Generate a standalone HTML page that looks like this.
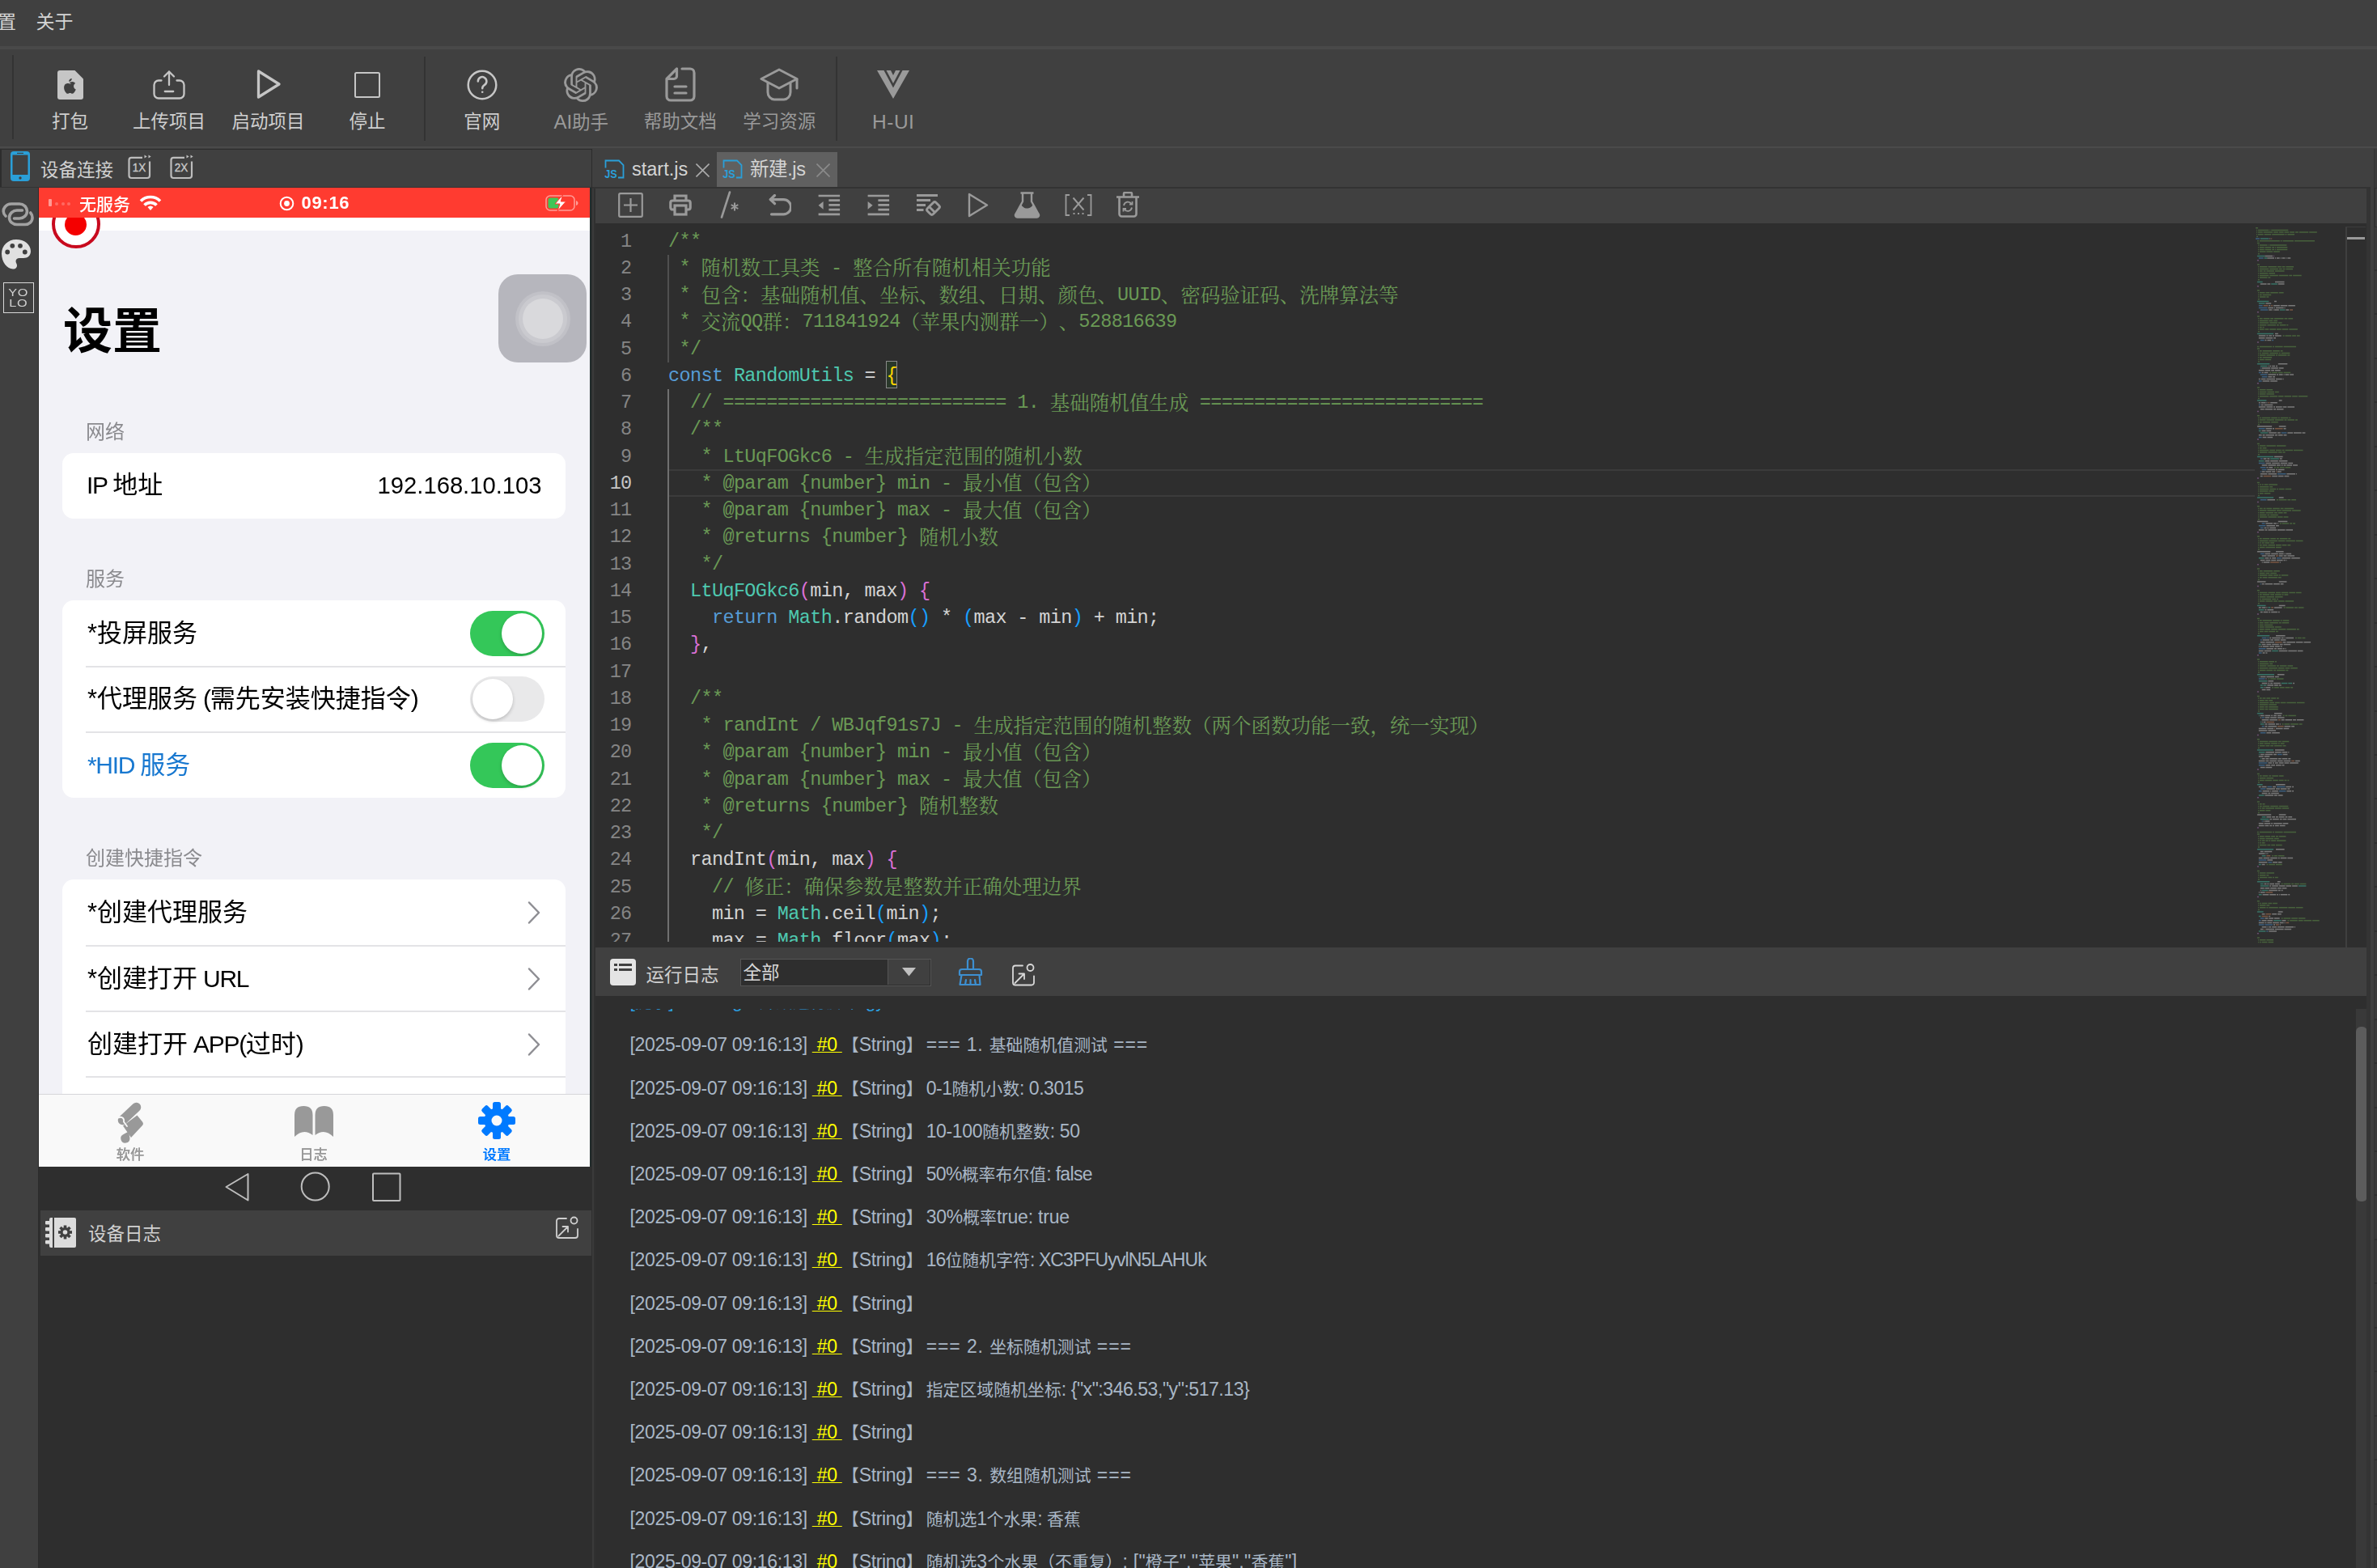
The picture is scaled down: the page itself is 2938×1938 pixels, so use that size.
<!DOCTYPE html>
<html lang="zh-CN"><head><meta charset="utf-8"><title>IDE</title>
<style>
*{box-sizing:border-box;margin:0;padding:0}
html,body{width:2938px;height:1938px;overflow:hidden;background:#404040}
body{position:relative;font-family:"Liberation Sans","Noto Sans CJK SC",sans-serif;color:#ccc}
.abs{position:absolute}
.ui{font-family:"Liberation Sans","Noto Sans CJK SC",sans-serif;font-size:22.5px;color:#cfcfcf;white-space:nowrap;line-height:30px}
.tb{position:absolute;top:61px;height:121px;width:122.5px;text-align:center}
.tb svg{position:absolute;left:50%;transform:translateX(-50%)}
.tb>span{position:absolute;left:0;width:100%;top:136px;margin-top:-61px;font-size:22.5px;line-height:30px;color:#cfcfcf;white-space:nowrap;text-align:center}
.tb.dim>span{color:#9a9a9a}
.vsep{position:absolute;width:2px;background:#333;top:68px;height:104px}
/* phone */
#phone{filter:blur(.45px);position:absolute;left:48px;top:232px;width:681px;height:1210px;background:#f2f2f7;overflow:hidden;font-family:"Liberation Sans","Noto Sans CJK SC",sans-serif;color:#000}
.card{position:absolute;left:29px;width:622px;background:#fff;border-radius:14px}
.glabel{position:absolute;left:58px;font-size:24px;color:#8a8a8e;line-height:30px;white-space:nowrap}
.row{position:absolute;left:60px;font-size:31px;line-height:40px;color:#000;white-space:nowrap}
.row .lt{font-size:30px;letter-spacing:-1.3px}
.rsep{position:absolute;left:58px;right:0;height:2px;background:#e3e3e6}
.tog{position:absolute;left:533px;width:92px;height:56px;border-radius:28px;background:#34c759}
.tog i{position:absolute;top:3px;right:3px;width:50px;height:50px;border-radius:25px;background:#fff;box-shadow:0 2px 4px rgba(0,0,0,.2)}
.tog.off{background:#e9e9ea}
.tog.off i{right:auto;left:3px}
.chev{position:absolute;left:603px;width:18px;height:30px}
/* editor */
#code{position:absolute;left:736px;top:276px;width:2189px;height:895px;background:#2e2e2e;overflow:hidden}
.ln{position:absolute;left:0;width:44.600px;text-align:right;font-family:"Liberation Mono","Noto Serif CJK SC",monospace;font-size:23.5px;letter-spacing:-.625px;line-height:33.25px;height:33.25px;color:#858585;white-space:pre}
.cl{position:absolute;left:90px;font-family:"Liberation Mono","Noto Serif CJK SC",monospace;font-size:23.5px;letter-spacing:-.625px;line-height:33.25px;height:33.25px;color:#d4d4d4;white-space:pre}
.cl b{font-weight:normal;font-family:"Noto Serif CJK SC","Liberation Mono",serif;font-size:24.5px;line-height:0;letter-spacing:0;position:relative;top:2.5px;text-spacing-trim:space-all;font-kerning:none}
.cm{color:#6a9955}.kw{color:#569cd6}.ty{color:#4ec9b0}.b1{color:#ffd700}.b2{color:#da70d6}.b3{color:#179fff}
/* log */
#log{position:absolute;left:736px;top:1231px;width:2190px;height:707px;background:#2e2e2e;overflow:hidden}
.ll{position:absolute;left:42.5px;font-family:"Liberation Sans","Noto Sans CJK SC",sans-serif;font-size:23px;letter-spacing:-.34px;line-height:30px;height:30px;color:#a9b7c6;white-space:pre}
.ll b{font-weight:normal;font-size:20.9px;letter-spacing:0;line-height:0;text-spacing-trim:space-all}
.ll u{color:#ffff00;text-decoration:underline;text-decoration-thickness:1.3px;text-underline-offset:.6px}
</style></head><body>

<div class="abs" style="left:0;top:0;width:2938px;height:58px;background:#404040"></div>
<div class="abs ui" style="left:-3px;top:12px;font-size:23px;color:#d4d4d4">置</div>
<div class="abs ui" style="left:44.500px;top:12px;font-size:23px;color:#d4d4d4">关于</div>
<div class="abs" style="left:0;top:57px;width:2938px;height:4px;background:#494949"></div>
<div class="vsep" style="left:14.500px"></div>
<div class="vsep" style="left:524px;top:70px"></div>
<div class="vsep" style="left:1033px;top:70px"></div>
<div class="tb" style="left:25.25px"><svg style="top:25.5px" width="32" height="36" viewBox="0 0 32 36"><path d="M0 3a3 3 0 0 1 3-3H21.5L32 10.5V33a3 3 0 0 1-3 3H3a3 3 0 0 1-3-3Z" fill="#c6c6c6"/><path d="M16.2 16.2c.9 0 1.9-.9 3.2-.8 1 0 2.300.6 3 1.600-2.500 1.500-2.100 5 .5 6-.5 1.300-1.100 2.500-2 3.500-.8.900-1.700.900-2.500.5-.9-.4-1.700-.4-2.600 0-1 .5-1.700.3-2.400-.4-3.400-3.700-2.900-9.400 1.200-9.600 1-.1 1.700.5 2.300.5.100 0 .8-.1 1.300-.3ZM18.900 12.200c.1 1.700-1.400 3.100-2.900 3-.2-1.600 1.400-3.100 2.900-3Z" fill="#404040" transform="translate(15.800 19.600) scale(1.250) translate(-17.300 -19.900)"/></svg><span>打包</span></div>
<div class="tb" style="left:147.75px"><svg style="top:25px" width="40" height="37" viewBox="0 0 40 37" fill="none" stroke="#c6c6c6" stroke-width="2.300" stroke-linecap="round" stroke-linejoin="round"><path d="M10.500 13.500H7a5.500 5.500 0 0 0-5.500 5.500v11a5.500 5.500 0 0 0 5.500 5.500h26a5.500 5.500 0 0 0 5.500-5.500V19a5.500 5.500 0 0 0-5.500-5.500H29.500"/><path d="M20 19V2.500M14 8.500l6-6 6 6M14.800 27h10.400"/></svg><span>上传项目</span></div>
<div class="tb" style="left:270.25px"><svg style="top:24px" width="32" height="38" viewBox="0 0 32 38" fill="none" stroke="#c6c6c6" stroke-width="3.300" stroke-linejoin="round"><path d="M3.500 3L29 19L3.500 35Z"/></svg><span>启动项目</span></div>
<div class="tb" style="left:392.75px"><svg style="top:28px" width="32" height="32" viewBox="0 0 32 32" fill="none" stroke="#c6c6c6" stroke-width="2"><rect x="1" y="1" width="30" height="30" rx="1.500"/></svg><span>停止</span></div>
<div class="tb" style="left:534.5px"><svg style="top:24.500px" width="38" height="38" viewBox="0 0 38 38" fill="none" stroke="#c6c6c6" stroke-width="2.500" stroke-linecap="round"><circle cx="19" cy="19" r="17.300"/><path d="M13.800 14.500a5.300 5.300 0 1 1 8.200 4.400c-2 1.300-2.800 2.200-2.800 4.300"/><circle cx="19.200" cy="27.800" r="1.300" fill="#c6c6c6" stroke="none"/></svg><span>官网</span></div>
<div class="tb dim" style="left:657px"><svg style="top:22.500px" width="42" height="42" viewBox="0 0 24 24"><path d="M22.2819 9.8211a5.9847 5.9847 0 0 0-.5157-4.9108 6.0462 6.0462 0 0 0-6.5098-2.9A6.0651 6.0651 0 0 0 4.9807 4.1818a5.9847 5.9847 0 0 0-3.9977 2.9 6.0462 6.0462 0 0 0 .7427 7.0966 5.98 5.98 0 0 0 .511 4.9107 6.051 6.051 0 0 0 6.5146 2.9001A5.9847 5.9847 0 0 0 13.2599 24a6.0557 6.0557 0 0 0 5.7718-4.2058 5.9894 5.9894 0 0 0 3.9977-2.9001 6.0557 6.0557 0 0 0-.7475-7.0729zm-9.022 12.6081a4.4755 4.4755 0 0 1-2.8764-1.0408l.1419-.0804 4.7783-2.7582a.7948.7948 0 0 0 .3927-.6813v-6.7369l2.02 1.1686a.071.071 0 0 1 .038.052v5.5826a4.504 4.504 0 0 1-4.4945 4.4944zm-9.6607-4.1254a4.4708 4.4708 0 0 1-.5346-3.0137l.142.0852 4.783 2.7582a.7712.7712 0 0 0 .7806 0l5.8428-3.3685v2.3324a.0804.0804 0 0 1-.0332.0615L9.74 19.9502a4.4992 4.4992 0 0 1-6.1408-1.6464zM2.3408 7.8956a4.485 4.485 0 0 1 2.3655-1.9728V11.6a.7664.7664 0 0 0 .3879.6765l5.8144 3.3543-2.0201 1.1685a.0757.0757 0 0 1-.071 0l-4.8303-2.7865A4.504 4.504 0 0 1 2.3408 7.872zm16.5963 3.8558L13.1038 8.364 15.1192 7.2a.0757.0757 0 0 1 .071 0l4.8303 2.7913a4.4944 4.4944 0 0 1-.6765 8.1042v-5.6772a.79.79 0 0 0-.407-.667zm2.0107-3.0231l-.142-.0852-4.7735-2.7818a.7759.7759 0 0 0-.7854 0L9.409 9.2297V6.8974a.0662.0662 0 0 1 .0284-.0615l4.8303-2.7866a4.4992 4.4992 0 0 1 6.6802 4.66zM8.3065 12.863l-2.02-1.1638a.0804.0804 0 0 1-.038-.0567V6.0742a4.4992 4.4992 0 0 1 7.3757-3.4537l-.142.0805L8.704 5.459a.7948.7948 0 0 0-.3927.6813zm1.0976-2.3654l2.602-1.4998 2.6069 1.4998v2.9994l-2.5974 1.4997-2.6067-1.4997Z" fill="#9a9a9a"/></svg><span><span style="font-size:24px">AI</span>助手</span></div>
<div class="tb dim" style="left:779.5px"><svg style="top:22px" width="38" height="43" viewBox="0 0 38 43" fill="none" stroke="#9a9a9a" stroke-width="3.200" stroke-linecap="round" stroke-linejoin="round"><path d="M21 2H31a5 5 0 0 1 5 5V36a5 5 0 0 1-5 5H7a5 5 0 0 1-5-5V14.500L14.500 2V11a3.500 3.500 0 0 1-3.500 3.500H2.500"/><path d="M12 24H26M12 32H26"/></svg><span>帮助文档</span></div>
<div class="tb dim" style="left:902px"><svg style="top:22.500px" width="48" height="42" viewBox="0 0 48 42" fill="none" stroke="#9a9a9a" stroke-width="3" stroke-linecap="round" stroke-linejoin="round"><path d="M24 2L2 13.500L24 25L46 13.500Z"/><path d="M10 18.500V30a8 9 0 0 0 8 9H30a8 9 0 0 0 8-9V18.500"/><path d="M46 14V25"/></svg><span>学习资源</span></div>
<div class="tb dim" style="left:1043px"><svg style="top:26px" width="40" height="35" viewBox="0 0 40 35"><path d="M0 0H8.500L20 21.500L31.500 0H40L20 35Z" fill="#9a9a9a"/><path d="M11.500 0H17L20 6L23 0H28.500L20 16Z" fill="#9a9a9a"/></svg><span><span style="font-size:24.500px;letter-spacing:.5px">H-UI</span></span></div>

<div class="abs" style="left:0;top:181.300px;width:2938px;height:1.800px;background:#4a4a4a"></div>

<!-- left panel frame -->
<div class="abs" style="left:0;top:183.500px;width:732px;height:1.500px;background:#2d2d2d"></div>
<div class="abs" style="left:730.500px;top:183.500px;width:1.500px;height:1755px;background:#2b2b2b"></div>
<div class="abs" style="left:0;top:230.500px;width:731px;height:1.500px;background:#333"></div>
<div class="abs" style="left:0;top:185px;width:2px;height:46px;background:#2d2d2d"></div>
<!-- device bar -->
<svg class="abs" style="left:13px;top:187px" width="24" height="37" viewBox="0 0 24 37"><rect x="0" y="0" width="24" height="37" rx="4" fill="#2a9fd8"/><rect x="2.500" y="4.500" width="19" height="24.500" fill="#404040"/><circle cx="12" cy="33" r="1.700" fill="#404040"/><rect x="8" y="1.800" width="8" height="1.200" fill="#404040"/></svg>
<div class="abs ui" style="left:50px;top:195.500px;color:#d0d0d0">设备连接</div>
<svg class="abs" style="left:157px;top:190px" width="31" height="32" viewBox="0 0 31 32" fill="none" stroke="#bdbdbd" stroke-width="2.200"><path d="M19 4.800H5.500a3 3 0 0 0-3 3V27a3 3 0 0 0 3 3H25a3 3 0 0 0 3-3V9.500"/><path d="M21.500 1.500l3.200 2-3.200 2zM26.500 1.500l3.200 2-3.200 2z" fill="#bdbdbd" stroke="none"/><text x="6.800" y="21.700" font-family="Liberation Sans,sans-serif" font-size="15" fill="#c8c8c8" stroke="#c8c8c8" stroke-width=".400" textLength="16.500" lengthAdjust="spacingAndGlyphs">1X</text></svg>
<svg class="abs" style="left:209px;top:190px" width="31" height="32" viewBox="0 0 31 32" fill="none" stroke="#bdbdbd" stroke-width="2.200"><path d="M19 4.800H5.500a3 3 0 0 0-3 3V27a3 3 0 0 0 3 3H25a3 3 0 0 0 3-3V9.500"/><path d="M21.500 1.500l3.200 2-3.200 2zM26.500 1.500l3.200 2-3.200 2z" fill="#bdbdbd" stroke="none"/><text x="6.800" y="21.700" font-family="Liberation Sans,sans-serif" font-size="15" fill="#c8c8c8" stroke="#c8c8c8" stroke-width=".400" textLength="16.500" lengthAdjust="spacingAndGlyphs">2X</text></svg>
<!-- left icon strip -->
<div class="abs" style="left:0;top:232px;width:48px;height:1706px;background:#2c2c2c"></div><div class="abs" style="left:0;top:232px;width:46.500px;height:1706px;background:#404040"></div>
<svg class="abs" style="left:0px;top:248px" width="44" height="34" viewBox="0 0 44 34" fill="none" stroke="#a2a2a2" stroke-width="3.600" stroke-linecap="round"><path d="M7 19C3.500 16 3.500 11 6 8C8 5 11 4 14 4H24C29 4 33.500 8 33.500 13C33.500 18 29 22 24 22H17.500"/><path d="M27.500 12H21C16 12 11.500 16 11.500 21C11.500 26 16 29.500 21 29.500H31C36 29.500 40 26 40 21C40 18.500 39 16.500 37.700 15"/></svg>
<svg class="abs" style="left:2px;top:296px" width="36" height="37" viewBox="0 0 36 37"><path d="M18 0C8 0 0 7.500 0 17.500 0 28 7 36.500 14 36.500c3.500 0 5-2 5-4.500 0-2-1.500-3-1.500-5 0-2.500 2-4 4.500-4H27c5.500 0 9-3.500 9-8.500C36 6 28 0 18 0Z" fill="#e0e0e0"/><circle cx="7.200" cy="15.500" r="2.900" fill="#404040"/><circle cx="13.300" cy="7.800" r="2.900" fill="#404040"/><circle cx="23" cy="7.800" r="2.900" fill="#404040"/><circle cx="28.800" cy="15.500" r="2.900" fill="#404040"/></svg>
<div class="abs" style="left:4px;top:349px;width:37.500px;height:37.500px;border:1.500px solid #d8d8d8"></div>
<div class="abs" style="left:4px;top:355px;width:37.500px;text-align:center;font-family:'Liberation Sans',sans-serif;font-size:13px;line-height:13px;color:#d0d0d0;letter-spacing:.5px;transform:scaleX(1.250)">YO<br>LO</div>

<div class="abs" style="left:48px;top:232px;width:684px;height:1706px;background:#2e2e2e"></div>
<div id="phone">
 <div class="abs" style="left:0;top:0;width:681px;height:37px;background:#ff3b30"></div>
 <div class="abs" style="left:0;top:37px;width:681px;height:16px;background:#fff"></div>
 <!-- record circle (clipped by status bar) -->
 <div class="abs" style="left:0;top:37px;width:200px;height:60px;overflow:hidden"><div class="abs" style="left:15.500px;top:-22px;width:60px;height:60px;border-radius:30px;border:4.500px solid #c80a1e;background:#fff"></div><div class="abs" style="left:31.800px;top:-5.500px;width:27.500px;height:27.500px;border-radius:14px;background:#f40000"></div></div>
 <!-- status bar content -->
 <div class="abs" style="left:12px;top:14px;width:4px;height:9px;border-radius:1px;background:#ff9a94"></div>
 <div class="abs" style="left:20px;top:18px;width:4px;height:4px;border-radius:2px;background:#ff6a62"></div>
 <div class="abs" style="left:27.500px;top:18px;width:4px;height:4px;border-radius:2px;background:#ff6a62"></div>
 <div class="abs" style="left:35px;top:18px;width:4px;height:4px;border-radius:2px;background:#ff6a62"></div>
 <div class="abs" style="left:50px;top:6.500px;font-size:21px;line-height:28px;color:#fff;font-weight:500;font-family:'Liberation Sans','Noto Sans CJK SC',sans-serif;white-space:nowrap;">无服务</div>
 <svg class="abs" style="left:124px;top:8px" width="28" height="21" viewBox="0 0 28 21" fill="none" stroke="#fff" stroke-width="3.600"><path d="M2 8.500a17 17 0 0 1 24 0"/><path d="M6.500 13.500a10.500 10.500 0 0 1 15 0"/><path d="M14 20l-3.500-4a4.800 4.800 0 0 1 7 0Z" fill="#fff" stroke="none"/></svg>
 <svg class="abs" style="left:297px;top:9.500px" width="19" height="19" viewBox="0 0 19 19"><circle cx="9.500" cy="9.500" r="7.800" fill="none" stroke="#fff" stroke-width="2"/><circle cx="9.500" cy="9.500" r="3.400" fill="#fff"/></svg>
 <div class="abs" style="left:324.500px;top:5px;font-size:22px;line-height:28px;color:#fff;font-weight:bold;font-family:'Liberation Sans',sans-serif;letter-spacing:.7px">09:16</div>
 <svg class="abs" style="left:626px;top:9px" width="42" height="20" viewBox="0 0 42 20"><rect x="1" y="1" width="35" height="18" rx="5" fill="none" stroke="#ff9d97" stroke-width="1.500"/><rect x="3.500" y="3.500" width="13" height="13" rx="2.500" fill="#3fc657"/><path d="M38 7v6c1.500-.5 2.500-1.500 2.500-3s-1-2.500-2.500-3Z" fill="#ff9d97"/><path d="M21.500 0L12 11h6l-3 9L25.500 8h-6.300Z" fill="#fff" stroke="#ff3b30" stroke-width="1"/></svg>
 <!-- title -->
 <div class="abs" style="left:30px;top:138px;font-size:61px;line-height:80px;font-weight:bold;color:#000;font-family:'Liberation Sans','Noto Sans CJK SC',sans-serif;white-space:nowrap">设置</div>
 <!-- assistive touch -->
 <div class="abs" style="left:568px;top:107px;width:109px;height:109px;border-radius:24px;background:#b6b6bd"></div>
 <div class="abs" style="left:588.500px;top:127.500px;width:68px;height:68px;border-radius:34px;background:#c1c1c7"></div>
 <div class="abs" style="left:592.500px;top:131.500px;width:60px;height:60px;border-radius:30px;background:#cacacf"></div>
 <div class="abs" style="left:597.500px;top:136.500px;width:50px;height:50px;border-radius:25px;background:#d9d9dc"></div>
 <!-- network -->
 <div class="glabel" style="top:287px">网络</div>
 <div class="card" style="top:328px;height:81px"></div>
 <div class="row" style="top:348px;left:59px"><span class="lt">IP </span>地址</div>
 <div class="row" style="left:auto;right:59.500px;top:348px;font-size:29.200px">192.168.10.103</div>
 <!-- services -->
 <div class="glabel" style="top:468.500px">服务</div>
 <div class="card" style="top:509.500px;height:244.500px"></div>
 <div class="row" style="top:531px">*投屏服务</div>
 <div class="tog" style="top:522.500px"><i></i></div>
 <div class="rsep" style="top:590.500px;right:30px"></div>
 <div class="row" style="top:612px">*代理服务<span class="lt"> (</span>需先安装快捷指令<span class="lt">)</span></div>
 <div class="tog off" style="top:604px"><i></i></div>
 <div class="rsep" style="top:671.500px;right:30px"></div>
 <div class="row" style="top:693.500px;color:#1878d0"><span class="lt">*HID </span>服务</div>
 <div class="tog" style="top:685.500px"><i></i></div>
 <!-- shortcuts -->
 <div class="glabel" style="top:813.500px">创建快捷指令</div>
 <div class="card" style="top:855px;height:400px;border-bottom-left-radius:0;border-bottom-right-radius:0"></div>
 <div class="row" style="top:876px">*创建代理服务</div>
 <svg class="chev" style="top:881px" viewBox="0 0 18 30" fill="none" stroke="#8e8e93" stroke-width="2.500" stroke-linecap="round" stroke-linejoin="round"><path d="M3 2.500L15 15L3 27.500"/></svg>
 <div class="rsep" style="top:935.500px;right:30px"></div>
 <div class="row" style="top:958px">*创建打开<span class="lt"> URL</span></div>
 <svg class="chev" style="top:963px" viewBox="0 0 18 30" fill="none" stroke="#8e8e93" stroke-width="2.500" stroke-linecap="round" stroke-linejoin="round"><path d="M3 2.500L15 15L3 27.500"/></svg>
 <div class="rsep" style="top:1016.500px;right:30px"></div>
 <div class="row" style="top:1039px">创建打开<span class="lt"> APP(</span>过时<span class="lt">)</span></div>
 <svg class="chev" style="top:1044px" viewBox="0 0 18 30" fill="none" stroke="#8e8e93" stroke-width="2.500" stroke-linecap="round" stroke-linejoin="round"><path d="M3 2.500L15 15L3 27.500"/></svg>
 <div class="rsep" style="top:1098px;right:30px"></div>
 <!-- tab bar -->
 <div class="abs" style="left:0;top:1119.500px;width:681px;height:91px;background:#f9f9f9;border-top:1.500px solid #d6d6d9"></div>
 <svg class="abs" style="left:95px;top:1129px" width="38" height="53" viewBox="0 0 38 53"><path d="M25.500 7.500L8.500 23.500" stroke="#999" stroke-width="11.500" stroke-linecap="round" fill="none"/><path d="M26.500 17.500L33 25.500A3.500 3.500 0 0 1 33 30L19 45L9 30.500Z" fill="#999"/><path d="M3.500 20.500C7 18.500 11 21 10 25.500L14 31" stroke="#f9f9f9" stroke-width="1.800" fill="none" stroke-linecap="round"/><path d="M16 37.500L17.500 46A5.600 5.600 0 1 1 9.500 41Z" fill="#999"/><path d="M8 30L19.500 45.500" stroke="#f9f9f9" stroke-width="0"/></svg>
 <svg class="abs" style="left:315.500px;top:1135px" width="48" height="39" viewBox="0 0 48 39" fill="#999"><path d="M0 38V11Q0 0 11.300 0Q22.500 0 22.500 11V36Q11 27 0 38Z"/><path d="M48 38V11Q48 0 36.700 0Q25.500 0 25.500 11V36Q37 27 48 38Z"/></svg>
 <svg class="abs" style="left:543px;top:1130px" width="46" height="46" viewBox="0 0 46 46"><g fill="#007aff"><circle cx="23" cy="23" r="15.500"/><g id="t"><rect x="18" y="0" width="10" height="12" rx="2.500"/></g><use href="#t" transform="rotate(45 23 23)"/><use href="#t" transform="rotate(90 23 23)"/><use href="#t" transform="rotate(135 23 23)"/><use href="#t" transform="rotate(180 23 23)"/><use href="#t" transform="rotate(225 23 23)"/><use href="#t" transform="rotate(270 23 23)"/><use href="#t" transform="rotate(315 23 23)"/></g><circle cx="23" cy="23" r="6.500" fill="#f9f9f9"/></svg>
 <div class="abs" style="left:63px;width:100px;top:1184px;text-align:center;font-size:17.300px;line-height:22px;color:#999;font-weight:500;white-space:nowrap;text-shadow:0 0 .5px #999">软件</div>
 <div class="abs" style="left:289.500px;width:100px;top:1184px;text-align:center;font-size:17.300px;line-height:22px;color:#999;font-weight:500;white-space:nowrap;text-shadow:0 0 .5px #999">日志</div>
 <div class="abs" style="left:516px;width:100px;top:1184px;text-align:center;font-size:17.300px;line-height:22px;color:#007aff;font-weight:500;white-space:nowrap;text-shadow:0 0 .5px #007aff">设置</div>
</div>
<!-- right edge dark of phone -->
<div class="abs" style="left:729px;top:232px;width:2px;height:1210px;background:#222c2c"></div>
<!-- nav buttons -->
<svg class="abs" style="left:276px;top:1448px" width="222" height="38" viewBox="0 0 222 38" fill="none" stroke="#bdbdbd" stroke-width="2" stroke-linejoin="round"><path d="M30.500 3V35.500L3.500 19Z"/><circle cx="113.700" cy="18.500" r="17"/><rect x="185" y="2.500" width="33.500" height="33.500" rx="1"/></svg>
<!-- device log bar -->
<div class="abs" style="left:50px;top:1496px;width:680.500px;height:55.500px;background:#404040"></div>
<svg class="abs" style="left:56px;top:1505px" width="38" height="37" viewBox="0 0 38 37"><rect x="5" y="0" width="33" height="37" rx="2" fill="#dcdcdc"/><g fill="#dcdcdc"><rect x="0" y="4" width="9" height="4.500" rx="1"/><rect x="0" y="12" width="9" height="4.500" rx="1"/><rect x="0" y="20" width="9" height="4.500" rx="1"/><rect x="0" y="28" width="9" height="4.500" rx="1"/></g><rect x="9" y="0" width="2" height="37" fill="#404040"/><g transform="translate(24.500 18)" fill="#404040"><circle r="6"/><g id="gt"><rect x="-1.800" y="-8.500" width="3.600" height="4"/></g><use href="#gt" transform="rotate(45)"/><use href="#gt" transform="rotate(90)"/><use href="#gt" transform="rotate(135)"/><use href="#gt" transform="rotate(180)"/><use href="#gt" transform="rotate(225)"/><use href="#gt" transform="rotate(270)"/><use href="#gt" transform="rotate(315)"/><circle r="2.800" fill="#dcdcdc"/></g></svg>
<div class="abs ui" style="left:109px;top:1511px;color:#d0d0d0">设备日志</div>
<svg class="abs" style="left:686px;top:1502px" width="30" height="30" viewBox="0 0 30 30" fill="none" stroke="#cfcfcf" stroke-width="1.800" stroke-linecap="round" stroke-linejoin="round"><path d="M14 4H5a3 3 0 0 0-3 3V25a3 3 0 0 0 3 3H25a3 3 0 0 0 3-3V17"/><circle cx="23.500" cy="6.500" r="4"/><path d="M4.500 25.500L15.500 14.500M9.500 14h6.500v6.500"/></svg>

<div class="abs" style="left:732px;top:183.500px;width:2206px;height:47.500px;background:#404040"></div>
<div class="abs" style="left:885.500px;top:187.500px;width:149.500px;height:43.500px;background:#606060"></div>
<svg class="abs" style="left:746.5px;top:197px" width="25" height="24" viewBox="0 0 25 24" fill="none" stroke="#2a9fd8" stroke-width="1.800"><path d="M1.500 10.500V1.500H18L23.500 7V22.500H17"/><text x="0.200" y="23.300" font-family="Liberation Sans,sans-serif" font-weight="bold" font-size="14.800" fill="#2a9fd8" stroke="none" textLength="15.500" lengthAdjust="spacingAndGlyphs">JS</text></svg>
<div class="abs ui" style="left:781px;top:194px;font-size:23.500px;color:#d4d4d4">start.js</div>
<svg class="abs" style="left:860px;top:202px" width="17" height="17" viewBox="0 0 17 17" stroke="#aaa" stroke-width="1.600" fill="none"><path d="M.5.5L16.500 16.500M16.500.5L.5 16.500"/></svg><svg class="abs" style="left:893px;top:197px" width="25" height="24" viewBox="0 0 25 24" fill="none" stroke="#2a9fd8" stroke-width="1.800"><path d="M1.500 10.500V1.500H18L23.500 7V22.500H17"/><text x="0.200" y="23.300" font-family="Liberation Sans,sans-serif" font-weight="bold" font-size="14.800" fill="#2a9fd8" stroke="none" textLength="15.500" lengthAdjust="spacingAndGlyphs">JS</text></svg>
<div class="abs ui" style="left:927px;top:194px;font-size:23.500px;color:#d4d4d4;letter-spacing:-.4px">新建.js</div>
<svg class="abs" style="left:1009px;top:202px" width="17" height="17" viewBox="0 0 17 17" stroke="#8a8a8a" stroke-width="1.600" fill="none"><path d="M.5.5L16.500 16.500M16.500.5L.5 16.500"/></svg>
<div class="abs" style="left:732px;top:231px;width:2206px;height:1.500px;background:#333"></div>
<div class="abs" style="left:732px;top:232.500px;width:4px;height:1706px;background:#3a3a3a"></div>
<div class="abs" style="left:734px;top:232.500px;width:1.500px;height:1706px;background:#303030"></div>
<!-- editor toolbar -->
<div class="abs" style="left:735.500px;top:232.500px;width:2189.500px;height:43.500px;background:#404040"></div>
<svg class="abs" style="left:764.0px;top:237.8px" width="31" height="31" viewBox="0 0 31 31" fill="none" stroke="#9a9a9a" stroke-width="2.2" ><rect x="1.200" y="1.200" width="28.600" height="28.600" rx="1.500"/><path d="M15.500 7V24M7 15.500H24"/></svg>
<svg class="abs" style="left:827.0px;top:239.8px" width="28" height="27" viewBox="0 0 28 27" fill="none" stroke="#9a9a9a" stroke-width="3.2" ><path d="M7 8V2h14V8"/><rect x="1.800" y="8" width="24.400" height="11" rx="2.500"/><rect x="7" y="14" width="14" height="11" fill="#404040"/></svg>
<svg class="abs" style="left:890.0px;top:236.3px" width="24" height="34" viewBox="0 0 24 34" fill="none" stroke="#9a9a9a" stroke-width="2.6" ><path d="M12 1.500L2 32.500" stroke-linecap="round"/><path d="M18 14.500V24.500M13.700 17L22.300 22M22.300 17L13.700 22" stroke-width="2"/></svg>
<svg class="abs" style="left:949.5px;top:239.8px" width="28" height="27" viewBox="0 0 28 27" fill="none" stroke="#9a9a9a" stroke-width="3.2" stroke-linecap="round" stroke-linejoin="round"><path d="M7.500 1.500L2.200 6.600L7.500 11.700"/><path d="M2.500 6.600H18.500a9.100 9.100 0 0 1 0 18.200H3.500"/></svg>
<svg class="abs" style="left:1009.8px;top:239.8px" width="29" height="27" viewBox="0 0 29 27" fill="none" stroke="#9a9a9a" stroke-width="2.7" ><path d="M1.600 2H28.100M14.400 7.700H28.100M14.400 13.400H28.100M14.400 19.100H28.100M1.600 24.800H28.100"/><path d="M7.600 8.900L1.600 13.800L7.600 18.700Z" fill="#9a9a9a" stroke="none"/></svg>
<svg class="abs" style="left:1071.3px;top:239.8px" width="29" height="27" viewBox="0 0 29 27" fill="none" stroke="#9a9a9a" stroke-width="2.7" ><path d="M1.600 2H28.100M14.400 7.700H28.100M14.400 13.400H28.100M14.400 19.100H28.100M1.600 24.800H28.100"/><path d="M1.600 8.900L7.600 13.800L1.600 18.700Z" fill="#9a9a9a" stroke="none"/></svg>
<svg class="abs" style="left:1132.0px;top:238.8px" width="31" height="29" viewBox="0 0 31 29" fill="none" stroke="#9a9a9a" stroke-width="2.9" ><path d="M1 2.500H27M1 8.500H18M1 14.500H12M1 20.500H9.500"/><rect x="-5" y="-7.500" width="10" height="15" rx="2.500" transform="translate(21.500 18.500) rotate(45)"/><path d="M17 17L23.500 23.500"/></svg>
<svg class="abs" style="left:1196.0px;top:237.8px" width="26" height="31" viewBox="0 0 26 31" fill="none" stroke="#9a9a9a" stroke-width="2.4" ><path d="M2 2L24 15.500L2 29Z" stroke-linejoin="round"/></svg>
<svg class="abs" style="left:1252.5px;top:236.8px" width="33" height="33" viewBox="0 0 33 33" fill="none" stroke="#9a9a9a" stroke-width="2.4" ><path d="M8.500 1.500H24.500M11 1.500V12L2.500 27.500A2.500 2.500 0 0 0 4.500 31.500H28.500A2.500 2.500 0 0 0 30.500 27.500L22 12V1.500" stroke-linejoin="round"/><path d="M9 16C12 20 14 20.500 16.500 20.500S21 20 24 16L30.500 28A2 2 0 0 1 28.500 31H4.500A2 2 0 0 1 2.500 28Z" fill="#9a9a9a" stroke="none"/></svg>
<svg class="abs" style="left:1315.5px;top:239.8px" width="34" height="27" viewBox="0 0 34 27" fill="none" stroke="#9a9a9a" stroke-width="2" ><path d="M6 1H1.500V26H6M28 1H32.500V26H28" stroke-width="1.800"/><path d="M10.500 4.500L23.500 19.500M23.500 4.500L10.500 19.500" stroke-width="2"/><path d="M10.500 24H12.500M16 24H18M21.500 24H23.500" stroke-width="2"/></svg>
<svg class="abs" style="left:1378.5px;top:237.3px" width="30" height="32" viewBox="0 0 30 32" fill="none" stroke="#9a9a9a" stroke-width="2.6" ><path d="M1 6.500H29M10 6V2.500A1.500 1.500 0 0 1 11.500 1H18.500A1.500 1.500 0 0 1 20 2.500V6"/><path d="M4.500 7V27.500A3 3 0 0 0 7.500 30.500H22.500A3 3 0 0 0 25.500 27.500V7"/><path d="M10 17A5.200 5.200 0 0 1 19.500 15M20 19.500A5.200 5.200 0 0 1 10.500 21.500" stroke-width="1.800"/><path d="M20.500 12V15.500H17M9.500 24.500V21H13" stroke-width="1.800"/></svg>
<div id="code">
<div class="abs" style="left:0;top:0;width:2051px;height:887.500px;overflow:hidden">
<div class="abs" style="left:90px;top:304.45px;width:1961px;height:33.25px;border-top:2px solid #3b3b3b;border-bottom:2px solid #3b3b3b"></div>
<div class="abs" style="left:358.70px;top:170.35px;width:14.500px;height:33.500px;border:1.300px solid #8a8a8a;background:#2a382a"></div>
<div class="abs" style="left:89.200px;top:38.95px;width:1.800px;height:133.00px;background:#505050"></div>
<div class="abs" style="left:89.200px;top:205.20px;width:2px;height:731.50px;background:#707070"></div>
<div class="ln" style="top:5.70px">1</div><div class="cl" style="top:5.70px"><span class="cm">/**</span> </div>
<div class="ln" style="top:38.95px">2</div><div class="cl" style="top:38.95px"><span class="cm"> * <b>随机数工具类</b> - <b>整合所有随机相关功能</b></span> </div>
<div class="ln" style="top:72.20px">3</div><div class="cl" style="top:72.20px"><span class="cm"> * <b>包含：基础随机值、坐标、数组、日期、颜色、</b>UUID<b>、密码验证码、洗牌算法等</b></span> </div>
<div class="ln" style="top:105.45px">4</div><div class="cl" style="top:105.45px"><span class="cm"> * <b>交流</b>QQ<b>群：</b>711841924<b>（苹果内测群一）、</b>528816639</span> </div>
<div class="ln" style="top:138.70px">5</div><div class="cl" style="top:138.70px"><span class="cm"> */</span> </div>
<div class="ln" style="top:171.95px">6</div><div class="cl" style="top:171.95px"><span class="kw">const</span> <span class="ty">RandomUtils</span> = <span class="b1">{</span> </div>
<div class="ln" style="top:205.20px">7</div><div class="cl" style="top:205.20px">  <span class="cm">// ========================== 1. <b>基础随机值生成</b> ==========================</span> </div>
<div class="ln" style="top:238.45px">8</div><div class="cl" style="top:238.45px">  <span class="cm">/**</span> </div>
<div class="ln" style="top:271.70px">9</div><div class="cl" style="top:271.70px">  <span class="cm"> * LtUqFOGkc6 - <b>生成指定范围的随机小数</b></span> </div>
<div class="ln" style="top:304.95px;color:#c6c6c6">10</div><div class="cl" style="top:304.95px">  <span class="cm"> * @param {number} min - <b>最小值（包含）</b></span> </div>
<div class="ln" style="top:338.20px">11</div><div class="cl" style="top:338.20px">  <span class="cm"> * @param {number} max - <b>最大值（包含）</b></span> </div>
<div class="ln" style="top:371.45px">12</div><div class="cl" style="top:371.45px">  <span class="cm"> * @returns {number} <b>随机小数</b></span> </div>
<div class="ln" style="top:404.70px">13</div><div class="cl" style="top:404.70px">  <span class="cm"> */</span> </div>
<div class="ln" style="top:437.95px">14</div><div class="cl" style="top:437.95px">  <span class="ty">LtUqFOGkc6</span><span class="b2">(</span>min, max<span class="b2">)</span> <span class="b2">{</span> </div>
<div class="ln" style="top:471.20px">15</div><div class="cl" style="top:471.20px">    <span class="kw">return</span> <span class="ty">Math</span>.random<span class="b3">()</span> * <span class="b3">(</span>max - min<span class="b3">)</span> + min; </div>
<div class="ln" style="top:504.45px">16</div><div class="cl" style="top:504.45px">  <span class="b2">}</span>, </div>
<div class="ln" style="top:537.70px">17</div><div class="cl" style="top:537.70px"> </div>
<div class="ln" style="top:570.95px">18</div><div class="cl" style="top:570.95px">  <span class="cm">/**</span> </div>
<div class="ln" style="top:604.20px">19</div><div class="cl" style="top:604.20px">  <span class="cm"> * randInt / WBJqf91s7J - <b>生成指定范围的随机整数（两个函数功能一致，统一实现）</b></span> </div>
<div class="ln" style="top:637.45px">20</div><div class="cl" style="top:637.45px">  <span class="cm"> * @param {number} min - <b>最小值（包含）</b></span> </div>
<div class="ln" style="top:670.70px">21</div><div class="cl" style="top:670.70px">  <span class="cm"> * @param {number} max - <b>最大值（包含）</b></span> </div>
<div class="ln" style="top:703.95px">22</div><div class="cl" style="top:703.95px">  <span class="cm"> * @returns {number} <b>随机整数</b></span> </div>
<div class="ln" style="top:737.20px">23</div><div class="cl" style="top:737.20px">  <span class="cm"> */</span> </div>
<div class="ln" style="top:770.45px">24</div><div class="cl" style="top:770.45px">  randInt<span class="b2">(</span>min, max<span class="b2">)</span> <span class="b2">{</span> </div>
<div class="ln" style="top:803.70px">25</div><div class="cl" style="top:803.70px">    <span class="cm">// <b>修正：确保参数是整数并正确处理边界</b></span> </div>
<div class="ln" style="top:836.95px">26</div><div class="cl" style="top:836.95px">    min = <span class="ty">Math</span>.ceil<span class="b3">(</span>min<span class="b3">)</span>; </div>
<div class="ln" style="top:870.20px">27</div><div class="cl" style="top:870.20px">    max = <span class="ty">Math</span>.floor<span class="b3">(</span>max<span class="b3">)</span>; </div>
</div>
<svg class="abs" style="left:2051px;top:5px" width="112" height="888" viewBox="0 0 112 888"><path d="M1.0 0.7h2.9M2.0 3.4h1.0M3.9 3.4h13.4M18.3 3.4h1.0M20.2 3.4h21.1M2.0 6.0h1.0M3.9 6.0h5.8M10.6 6.0h11.5M23.1 6.0h5.8M29.8 6.0h5.8M36.5 6.0h5.8M43.2 6.0h5.8M50.0 6.0h3.8M54.8 6.0h11.5M67.2 6.0h9.6M2.0 8.7h1.0M3.9 8.7h6.7M11.6 8.7h8.6M21.2 8.7h15.4M37.5 8.7h1.9M40.4 8.7h8.6M2.0 11.4h1.9M2.9 16.7h1.9M5.8 16.7h25.0M31.7 16.7h1.9M34.6 16.7h13.4M49.0 16.7h25.0M2.9 19.4h2.9M3.9 22.0h1.0M5.8 22.0h9.6M16.4 22.0h1.0M18.3 22.0h21.1M3.9 24.7h1.0M5.8 24.7h5.8M12.5 24.7h7.7M21.2 24.7h2.9M25.0 24.7h1.0M26.9 24.7h13.4M3.9 27.4h1.0M5.8 27.4h5.8M12.5 27.4h7.7M21.2 27.4h2.9M25.0 27.4h1.0M26.9 27.4h13.4M3.9 30.0h1.0M5.8 30.0h7.7M14.4 30.0h7.7M23.1 30.0h7.7M3.9 32.7h1.9M2.9 46.0h2.9M3.9 48.7h1.0M5.8 48.7h9.6M16.4 48.7h10.6M27.9 48.7h4.8M33.6 48.7h3.8M38.4 48.7h9.6M3.9 51.4h1.0M5.8 51.4h11.5M18.3 51.4h10.6M29.8 51.4h3.8M34.6 51.4h2.9M38.4 51.4h8.6M3.9 54.0h1.0M5.8 54.0h3.8M10.6 54.0h2.9M14.4 54.0h9.6M25.0 54.0h11.5M3.9 56.7h1.0M5.8 56.7h10.6M17.3 56.7h7.7M3.9 59.4h1.0M5.8 59.4h11.5M18.3 59.4h10.6M29.8 59.4h11.5M42.3 59.4h3.8M47.1 59.4h10.6M3.9 62.0h1.0M5.8 62.0h9.6M16.4 62.0h2.9M3.9 64.7h1.9M2.9 78.0h2.9M3.9 80.7h1.0M5.8 80.7h6.7M13.5 80.7h4.8M19.2 80.7h9.6M29.8 80.7h5.8M3.9 83.4h1.0M5.8 83.4h2.9M9.6 83.4h10.6M3.9 86.0h1.0M5.8 86.0h7.7M14.4 86.0h2.9M3.9 88.7h1.9M2.9 110.0h2.9M3.9 112.7h1.0M5.8 112.7h3.8M10.6 112.7h7.7M19.2 112.7h3.8M24.0 112.7h11.5M36.5 112.7h3.8M41.3 112.7h5.8M3.9 115.4h1.0M5.8 115.4h10.6M17.3 115.4h4.8M23.1 115.4h4.8M3.9 118.0h1.0M5.8 118.0h11.5M18.3 118.0h9.6M28.8 118.0h4.8M3.9 120.7h1.0M5.8 120.7h8.6M15.4 120.7h10.6M26.9 120.7h2.9M30.8 120.7h7.7M39.4 120.7h1.9M3.9 123.4h1.0M5.8 123.4h2.9M9.6 123.4h1.9M3.9 126.0h1.0M5.8 126.0h5.8M12.5 126.0h4.8M18.3 126.0h7.7M26.9 126.0h5.8M33.6 126.0h7.7M42.3 126.0h10.6M3.9 128.7h1.9M34.6 134.0h1.9M37.5 134.0h7.7M46.1 134.0h4.8M51.9 134.0h3.8M2.9 147.4h1.9M5.8 147.4h15.4M22.1 147.4h1.9M25.0 147.4h9.6M35.6 147.4h15.4M2.9 150.1h2.9M3.9 152.7h1.0M5.8 152.7h2.9M9.6 152.7h11.5M22.1 152.7h8.6M31.7 152.7h2.9M3.9 155.4h1.0M5.8 155.4h1.9M8.7 155.4h8.6M18.3 155.4h10.6M29.8 155.4h1.9M32.7 155.4h10.6M3.9 158.1h1.0M5.8 158.1h7.7M14.4 158.1h10.6M26.0 158.1h1.9M28.8 158.1h10.6M40.4 158.1h2.9M3.9 160.7h1.0M5.8 160.7h2.9M9.6 160.7h11.5M3.9 163.4h1.0M5.8 163.4h5.8M12.5 163.4h7.7M3.9 166.1h1.9M18.3 179.4h1.9M21.2 179.4h6.7M28.8 179.4h5.8M35.6 179.4h8.6M2.9 198.1h2.9M3.9 200.7h1.0M5.8 200.7h7.7M14.4 200.7h7.7M3.9 203.4h1.0M5.8 203.4h8.6M15.4 203.4h8.6M25.0 203.4h4.8M3.9 206.1h1.0M5.8 206.1h7.7M14.4 206.1h9.6M3.9 208.7h1.0M5.8 208.7h11.5M18.3 208.7h9.6M28.8 208.7h6.7M36.5 208.7h8.6M46.1 208.7h6.7M53.8 208.7h11.5M3.9 211.4h1.9M2.9 232.7h2.9M3.9 235.4h1.0M5.8 235.4h1.9M8.7 235.4h10.6M20.2 235.4h7.7M28.8 235.4h1.9M31.7 235.4h9.6M42.3 235.4h1.9M3.9 238.1h1.0M5.8 238.1h7.7M14.4 238.1h9.6M25.0 238.1h10.6M36.5 238.1h2.9M40.4 238.1h8.6M50.0 238.1h2.9M3.9 240.7h1.0M5.8 240.7h2.9M9.6 240.7h9.6M20.2 240.7h8.6M3.9 243.4h1.9M2.9 267.4h2.9M3.9 270.1h1.0M5.8 270.1h7.7M14.4 270.1h11.5M26.9 270.1h11.5M3.9 272.7h1.0M5.8 272.7h2.9M9.6 272.7h4.8M3.9 275.4h1.0M5.8 275.4h11.5M18.3 275.4h6.7M26.0 275.4h6.7M33.6 275.4h2.9M37.5 275.4h9.6M48.0 275.4h11.5M3.9 278.1h1.0M5.8 278.1h9.6M16.4 278.1h11.5M28.8 278.1h4.8M34.6 278.1h2.9M3.9 280.7h1.9M24.0 296.7h1.9M26.9 296.7h2.9M30.8 296.7h5.8M37.5 296.7h6.7M2.9 315.4h2.9M3.9 318.1h1.0M5.8 318.1h1.9M8.7 318.1h1.9M11.6 318.1h4.8M17.3 318.1h10.6M3.9 320.7h1.0M5.8 320.7h11.5M18.3 320.7h3.8M3.9 323.4h1.0M5.8 323.4h11.5M18.3 323.4h7.7M26.9 323.4h1.9M29.8 323.4h6.7M37.5 323.4h7.7M3.9 326.1h1.0M5.8 326.1h10.6M17.3 326.1h6.7M3.9 328.7h1.0M5.8 328.7h4.8M11.6 328.7h7.7M3.9 331.4h1.9M26.9 336.7h1.9M29.8 336.7h9.6M40.4 336.7h3.8M45.2 336.7h5.8M2.9 344.7h2.9M3.9 347.4h1.0M5.8 347.4h3.8M10.6 347.4h2.9M14.4 347.4h6.7M22.1 347.4h8.6M31.7 347.4h3.8M36.5 347.4h11.5M3.9 350.1h1.0M5.8 350.1h8.6M15.4 350.1h10.6M26.9 350.1h5.8M33.6 350.1h11.5M46.1 350.1h10.6M3.9 352.7h1.0M5.8 352.7h6.7M13.5 352.7h9.6M24.0 352.7h3.8M28.8 352.7h5.8M35.6 352.7h3.8M3.9 355.4h1.0M5.8 355.4h8.6M15.4 355.4h2.9M19.2 355.4h9.6M3.9 358.1h1.0M5.8 358.1h9.6M16.4 358.1h10.6M27.9 358.1h6.7M35.6 358.1h5.8M3.9 360.7h1.9M30.8 366.1h1.9M33.6 366.1h8.6M43.2 366.1h2.9M47.1 366.1h2.9M2.9 382.1h2.9M3.9 384.7h1.0M5.8 384.7h2.9M9.6 384.7h8.6M19.2 384.7h6.7M26.9 384.7h2.9M30.8 384.7h9.6M41.3 384.7h2.9M3.9 387.4h1.0M5.8 387.4h10.6M17.3 387.4h10.6M28.8 387.4h8.6M38.4 387.4h11.5M50.9 387.4h8.6M3.9 390.1h1.0M5.8 390.1h1.9M8.7 390.1h2.9M12.5 390.1h5.8M19.2 390.1h4.8M3.9 392.7h1.0M5.8 392.7h2.9M9.6 392.7h5.8M16.4 392.7h8.6M26.0 392.7h6.7M33.6 392.7h5.8M40.4 392.7h3.8M3.9 395.4h1.0M5.8 395.4h6.7M13.5 395.4h11.5M26.0 395.4h6.7M3.9 398.1h1.9M2.9 422.1h2.9M3.9 424.8h1.0M5.8 424.8h3.8M10.6 424.8h11.5M23.1 424.8h7.7M3.9 427.4h1.0M5.8 427.4h6.7M13.5 427.4h4.8M19.2 427.4h7.7M3.9 430.1h1.0M5.8 430.1h9.6M16.4 430.1h5.8M23.1 430.1h5.8M29.8 430.1h1.9M32.7 430.1h8.6M3.9 432.8h1.0M5.8 432.8h2.9M9.6 432.8h5.8M16.4 432.8h11.5M28.8 432.8h3.8M3.9 435.4h1.9M2.9 448.8h2.9M3.9 451.4h1.0M5.8 451.4h9.6M16.4 451.4h8.6M26.0 451.4h5.8M32.7 451.4h8.6M42.3 451.4h7.7M50.9 451.4h6.7M3.9 454.1h1.0M5.8 454.1h2.9M9.6 454.1h8.6M19.2 454.1h4.8M25.0 454.1h7.7M33.6 454.1h1.9M36.5 454.1h4.8M3.9 456.8h1.0M5.8 456.8h7.7M14.4 456.8h9.6M25.0 456.8h9.6M3.9 459.4h1.0M5.8 459.4h1.9M8.7 459.4h11.5M21.2 459.4h4.8M26.9 459.4h1.9M3.9 462.1h1.0M5.8 462.1h6.7M13.5 462.1h8.6M23.1 462.1h4.8M28.8 462.1h7.7M37.5 462.1h10.6M3.9 464.8h1.9M35.6 470.1h1.9M38.4 470.1h9.6M49.0 470.1h3.8M53.8 470.1h6.7M2.9 483.4h2.9M3.9 486.1h1.0M5.8 486.1h2.9M9.6 486.1h11.5M22.1 486.1h8.6M31.7 486.1h1.9M34.6 486.1h7.7M3.9 488.8h1.0M5.8 488.8h4.8M11.6 488.8h5.8M18.3 488.8h10.6M29.8 488.8h2.9M33.6 488.8h8.6M3.9 491.4h1.0M5.8 491.4h4.8M11.6 491.4h10.6M3.9 494.1h1.0M5.8 494.1h5.8M12.5 494.1h11.5M25.0 494.1h7.7M3.9 496.8h1.0M5.8 496.8h5.8M12.5 496.8h6.7M20.2 496.8h7.7M28.8 496.8h9.6M39.4 496.8h11.5M51.9 496.8h2.9M3.9 499.4h1.0M5.8 499.4h4.8M11.6 499.4h4.8M17.3 499.4h7.7M26.0 499.4h2.9M3.9 502.1h1.9M50.0 507.4h1.9M52.8 507.4h4.8M58.6 507.4h3.8M2.9 534.1h2.9M3.9 536.8h1.0M5.8 536.8h10.6M17.3 536.8h6.7M25.0 536.8h1.9M3.9 539.4h1.0M5.8 539.4h11.5M18.3 539.4h3.8M3.9 542.1h1.0M5.8 542.1h8.6M15.4 542.1h10.6M26.9 542.1h2.9M30.8 542.1h8.6M40.4 542.1h6.7M3.9 544.8h1.0M5.8 544.8h10.6M17.3 544.8h10.6M28.8 544.8h7.7M37.5 544.8h5.8M44.2 544.8h8.6M3.9 547.4h1.0M5.8 547.4h7.7M14.4 547.4h7.7M23.1 547.4h2.9M26.9 547.4h10.6M38.4 547.4h2.9M3.9 550.1h1.9M16.4 558.1h1.9M19.2 558.1h6.7M26.9 558.1h8.6M21.2 568.8h1.9M24.0 568.8h5.8M30.8 568.8h5.8M37.5 568.8h5.8M44.2 568.8h2.9M2.9 579.4h2.9M3.9 582.1h1.0M5.8 582.1h2.9M9.6 582.1h3.8M14.4 582.1h4.8M20.2 582.1h5.8M26.9 582.1h2.9M3.9 584.8h1.0M5.8 584.8h5.8M12.5 584.8h3.8M17.3 584.8h4.8M3.9 587.4h1.0M5.8 587.4h11.5M18.3 587.4h5.8M25.0 587.4h5.8M31.7 587.4h6.7M39.4 587.4h11.5M51.9 587.4h9.6M3.9 590.1h1.0M5.8 590.1h10.6M17.3 590.1h9.6M3.9 592.8h1.0M5.8 592.8h5.8M12.5 592.8h3.8M17.3 592.8h11.5M3.9 595.4h1.0M5.8 595.4h5.8M12.5 595.4h3.8M17.3 595.4h11.5M3.9 598.1h1.9M34.6 603.4h1.9M37.5 603.4h2.9M41.3 603.4h9.6M33.6 614.1h1.9M36.5 614.1h6.7M44.2 614.1h9.6M54.8 614.1h3.8M2.9 632.8h2.9M3.9 635.4h1.0M5.8 635.4h10.6M17.3 635.4h10.6M28.8 635.4h3.8M33.6 635.4h8.6M3.9 638.1h1.0M5.8 638.1h4.8M11.6 638.1h7.7M20.2 638.1h7.7M28.8 638.1h1.9M31.7 638.1h4.8M3.9 640.8h1.0M5.8 640.8h6.7M13.5 640.8h4.8M19.2 640.8h3.8M24.0 640.8h9.6M34.6 640.8h3.8M3.9 643.4h1.9M2.9 675.5h2.9M3.9 678.1h1.0M5.8 678.1h2.9M9.6 678.1h6.7M17.3 678.1h2.9M21.2 678.1h7.7M29.8 678.1h5.8M3.9 680.8h1.0M5.8 680.8h7.7M14.4 680.8h8.6M3.9 683.5h1.0M5.8 683.5h5.8M12.5 683.5h8.6M22.1 683.5h6.7M29.8 683.5h5.8M36.5 683.5h2.9M40.4 683.5h1.9M3.9 686.1h1.9M2.9 710.1h2.9M3.9 712.8h1.0M5.8 712.8h2.9M9.6 712.8h2.9M3.9 715.5h1.0M5.8 715.5h2.9M9.6 715.5h8.6M19.2 715.5h9.6M29.8 715.5h11.5M3.9 718.1h1.0M5.8 718.1h1.9M8.7 718.1h3.8M13.5 718.1h10.6M25.0 718.1h7.7M33.6 718.1h8.6M3.9 720.8h1.0M5.8 720.8h6.7M13.5 720.8h5.8M3.9 723.5h1.9M2.9 747.5h1.9M5.8 747.5h15.4M22.1 747.5h1.9M25.0 747.5h9.6M35.6 747.5h15.4M2.9 750.1h2.9M3.9 752.8h1.0M5.8 752.8h5.8M12.5 752.8h6.7M20.2 752.8h4.8M26.0 752.8h2.9M29.8 752.8h8.6M3.9 755.5h1.0M5.8 755.5h6.7M13.5 755.5h9.6M24.0 755.5h5.8M3.9 758.1h1.0M5.8 758.1h1.9M8.7 758.1h3.8M13.5 758.1h2.9M17.3 758.1h1.9M20.2 758.1h5.8M26.9 758.1h11.5M3.9 760.8h1.0M5.8 760.8h1.9M8.7 760.8h3.8M3.9 763.5h1.0M5.8 763.5h8.6M15.4 763.5h3.8M20.2 763.5h4.8M26.0 763.5h7.7M3.9 766.1h1.9M21.2 776.8h1.9M24.0 776.8h3.8M28.8 776.8h7.7M14.4 787.5h1.9M17.3 787.5h7.7M26.0 787.5h7.7M2.9 795.5h2.9M3.9 798.1h1.0M5.8 798.1h7.7M14.4 798.1h9.6M3.9 800.8h1.0M5.8 800.8h7.7M14.4 800.8h2.9M3.9 803.5h1.0M5.8 803.5h9.6M16.4 803.5h4.8M22.1 803.5h1.9M25.0 803.5h3.8M3.9 806.1h1.9M32.7 811.5h1.9M35.6 811.5h8.6M45.2 811.5h2.9M49.0 811.5h5.8M55.7 811.5h7.7M2.9 832.8h2.9M3.9 835.5h1.0M5.8 835.5h1.9M8.7 835.5h6.7M16.4 835.5h4.8M22.1 835.5h5.8M3.9 838.1h1.0M5.8 838.1h7.7M14.4 838.1h3.8M3.9 840.8h1.0M5.8 840.8h7.7M14.4 840.8h1.9M17.3 840.8h11.5M29.8 840.8h10.6M41.3 840.8h8.6M50.9 840.8h8.6M3.9 843.5h1.9M32.7 854.1h1.9M35.6 854.1h8.6M45.2 854.1h7.7M53.8 854.1h8.6M40.4 856.8h1.9M43.2 856.8h9.6M53.8 856.8h5.8M60.5 856.8h9.6M71.1 856.8h8.6M2.9 878.1h2.9M3.9 880.8h1.0M5.8 880.8h7.7M14.4 880.8h8.6M3.9 883.5h1.0M5.8 883.5h1.9M8.7 883.5h6.7M16.4 883.5h6.7" stroke="#4d6e40" stroke-width="1.500" opacity=".8" fill="none"/><path d="M1.0 14.0h4.8M4.8 38.0h5.8M4.8 96.7h4.8M4.8 99.4h10.6M6.8 102.0h9.6M6.8 139.4h4.8M21.2 139.4h1.9M6.8 174.1h1.0M4.8 179.4h2.9M6.8 182.1h8.6M8.7 184.7h6.7M4.8 190.1h3.8M4.8 219.4h1.9M4.8 248.7h7.7M32.7 254.1h6.7M4.8 259.4h3.8M6.8 286.1h2.9M4.8 291.4h7.7M6.8 296.7h6.7M8.7 299.4h5.8M6.8 302.1h1.0M27.9 304.7h10.6M6.8 336.7h7.7M8.7 366.1h3.8M4.8 368.7h8.6M6.8 371.4h3.8M6.8 403.4h4.8M26.9 408.8h5.8M6.8 440.8h1.0M8.7 507.4h5.8M15.4 507.4h1.9M6.8 510.1h1.9M4.8 520.8h8.6M4.8 526.1h3.8M4.8 558.1h7.7M8.7 606.1h2.9M8.7 616.8h2.9M6.8 624.8h6.7M27.9 651.4h5.8M4.8 662.1h10.6M4.8 664.8h7.7M15.4 691.5h5.8M26.9 691.5h10.6M6.8 694.1h6.7M4.8 696.8h3.8M29.8 696.8h8.6M8.7 734.1h1.0M4.8 782.1h9.6M16.4 784.8h4.8M6.8 854.1h4.8M4.8 856.8h2.9M4.8 862.1h6.7M12.5 862.1h9.6M14.4 870.1h1.9" stroke="#3f6c93" stroke-width="1.500" opacity=".8" fill="none"/><path d="M6.8 14.0h10.6M2.9 35.4h9.6M11.6 38.0h3.8M2.9 67.4h6.7M20.2 70.0h7.7M2.9 91.4h14.4M4.8 94.0h7.7M30.8 102.0h6.7M2.9 131.4h20.2M2.9 168.7h15.4M6.8 171.4h8.6M2.9 214.1h11.5M4.8 251.4h2.9M6.8 254.1h9.6M2.9 283.4h20.2M19.2 286.1h10.6M4.8 288.7h6.7M2.9 334.1h20.2M4.8 408.8h6.7M2.9 467.4h10.6M16.4 470.1h2.9M4.8 472.8h6.7M2.9 504.8h15.4M4.8 515.4h2.9M21.2 523.4h7.7M2.9 552.8h21.1M4.8 555.4h1.0M4.8 560.8h10.6M32.7 563.4h7.7M41.3 563.4h4.8M6.8 566.1h2.9M10.6 566.1h3.8M6.8 568.8h3.8M2.9 600.8h7.7M4.8 603.4h1.0M6.8 611.4h1.0M6.8 614.1h4.8M2.9 646.1h20.2M4.8 648.8h7.7M4.8 651.4h1.0M6.8 656.8h1.0M2.9 688.8h6.7M4.8 702.1h6.7M8.7 728.8h4.8M6.8 731.5h10.6M2.9 768.8h20.2M8.7 776.8h4.8M4.8 787.5h2.9M2.9 808.8h15.4M6.8 811.5h3.8M6.8 814.1h10.6M53.8 814.1h9.6M8.7 819.5h7.7M4.8 824.8h3.8M2.9 846.1h7.7M4.8 851.5h2.9M23.1 856.8h9.6M4.8 870.1h8.6" stroke="#3b8576" stroke-width="1.500" opacity=".8" fill="none"/><path d="M18.3 14.0h1.0M12.5 35.4h9.6M15.4 38.0h8.6M25.0 38.0h1.0M26.9 38.0h3.8M31.7 38.0h1.0M33.6 38.0h3.8M38.4 38.0h1.0M40.4 38.0h3.8M25.0 67.4h11.5M6.8 70.0h7.7M15.4 70.0h3.8M28.8 70.0h7.7M24.0 91.4h2.9M13.5 94.0h6.7M17.3 96.7h1.9M23.1 96.7h7.7M31.7 96.7h8.6M41.3 96.7h8.6M16.4 99.4h6.7M24.0 99.4h1.0M26.0 99.4h9.6M36.5 99.4h1.0M17.3 102.0h3.8M22.1 102.0h1.0M24.0 102.0h5.8M38.4 102.0h3.8M25.0 131.4h3.8M4.8 134.0h8.6M14.4 134.0h1.9M17.3 134.0h3.8M22.1 134.0h1.9M25.0 134.0h7.7M4.8 136.7h7.7M13.5 136.7h8.6M23.1 136.7h2.9M12.5 139.4h1.9M15.4 139.4h4.8M28.8 168.7h11.5M16.4 171.4h1.0M18.3 171.4h1.9M21.2 171.4h3.8M26.0 171.4h1.9M8.7 174.1h10.6M20.2 174.1h8.6M29.8 174.1h5.8M4.8 176.7h6.7M12.5 176.7h6.7M20.2 176.7h3.8M25.0 176.7h6.7M8.7 179.4h1.9M11.6 179.4h4.8M16.4 182.1h9.6M26.9 182.1h1.9M29.8 182.1h4.8M35.6 182.1h1.0M37.5 182.1h4.8M43.2 182.1h4.8M16.4 184.7h4.8M22.1 184.7h2.9M4.8 187.4h1.9M7.7 187.4h5.8M14.4 187.4h10.6M26.0 187.4h7.7M34.6 187.4h1.0M9.6 190.1h8.6M19.2 190.1h8.6M29.8 214.1h3.8M4.8 216.7h1.9M7.7 216.7h5.8M14.4 216.7h1.0M19.2 216.7h8.6M7.7 219.4h2.9M11.6 219.4h10.6M4.8 222.1h8.6M14.4 222.1h7.7M23.1 222.1h1.9M26.0 222.1h7.7M34.6 222.1h4.8M40.4 222.1h8.6M6.8 224.7h4.8M12.5 224.7h9.6M23.1 224.7h2.9M26.9 224.7h8.6M2.9 246.1h18.2M29.8 246.1h8.6M13.5 248.7h7.7M22.1 248.7h1.9M35.6 248.7h2.9M8.7 251.4h4.8M14.4 251.4h5.8M17.3 254.1h9.6M27.9 254.1h3.8M40.4 254.1h6.7M48.0 254.1h9.6M58.6 254.1h3.8M4.8 256.7h3.8M9.6 256.7h2.9M13.5 256.7h10.6M25.0 256.7h2.9M28.8 256.7h5.8M35.6 256.7h3.8M9.6 259.4h4.8M15.4 259.4h6.7M24.0 283.4h10.6M10.6 286.1h3.8M15.4 286.1h2.9M30.8 286.1h2.9M12.5 288.7h5.8M19.2 288.7h9.6M29.8 288.7h10.6M13.5 291.4h6.7M21.2 291.4h9.6M31.7 291.4h8.6M41.3 291.4h5.8M8.7 294.1h6.7M16.4 294.1h9.6M26.9 294.1h4.8M32.7 294.1h1.9M35.6 294.1h2.9M39.4 294.1h6.7M47.1 294.1h5.8M14.4 296.7h1.9M17.3 296.7h4.8M15.4 299.4h9.6M26.0 299.4h1.9M28.8 299.4h7.7M8.7 302.1h3.8M13.5 302.1h6.7M21.2 302.1h3.8M27.9 302.1h4.8M6.8 304.7h8.6M16.4 304.7h10.6M39.4 304.7h10.6M50.9 304.7h1.0M6.8 307.4h2.9M21.2 307.4h6.7M28.8 307.4h6.7M36.5 307.4h5.8M29.8 334.1h5.8M15.4 336.7h9.6M2.9 363.4h13.4M28.8 363.4h11.5M13.5 366.1h8.6M23.1 366.1h3.8M27.9 366.1h1.0M14.4 368.7h10.6M26.0 368.7h3.8M11.6 371.4h2.9M15.4 371.4h1.9M18.3 371.4h7.7M4.8 374.1h6.7M12.5 374.1h2.9M16.4 374.1h10.6M27.9 374.1h9.6M38.4 374.1h8.6M2.9 400.7h16.3M26.0 400.7h9.6M12.5 403.4h6.7M20.2 403.4h8.6M29.8 403.4h5.8M36.5 403.4h1.0M38.4 403.4h6.7M8.7 406.1h5.8M15.4 406.1h9.6M29.8 406.1h4.8M35.6 406.1h3.8M40.4 406.1h8.6M12.5 408.8h4.8M18.3 408.8h1.9M21.2 408.8h4.8M33.6 408.8h10.6M45.2 408.8h10.6M6.8 411.4h5.8M13.5 411.4h5.8M20.2 411.4h5.8M26.9 411.4h7.7M35.6 411.4h1.9M38.4 411.4h1.0M8.7 414.1h1.0M10.6 414.1h7.7M30.8 414.1h1.0M2.9 438.1h10.6M29.8 438.1h9.6M8.7 440.8h2.9M12.5 440.8h9.6M23.1 440.8h7.7M31.7 440.8h3.8M29.8 467.4h7.7M4.8 470.1h2.9M8.7 470.1h4.8M14.4 470.1h1.0M24.0 470.1h9.6M12.5 472.8h1.9M15.4 472.8h7.7M6.8 475.4h2.9M10.6 475.4h5.8M17.3 475.4h1.9M20.2 475.4h7.7M28.8 475.4h1.9M26.0 504.8h11.5M18.3 507.4h1.9M21.2 507.4h10.6M32.7 507.4h2.9M36.5 507.4h1.0M38.4 507.4h9.6M9.6 510.1h8.6M19.2 510.1h3.8M24.0 510.1h6.7M31.7 510.1h6.7M6.8 512.8h5.8M13.5 512.8h10.6M34.6 512.8h3.8M39.4 512.8h10.6M50.9 512.8h8.6M60.5 512.8h8.6M8.7 515.4h4.8M14.4 515.4h5.8M21.2 515.4h8.6M30.8 515.4h3.8M35.6 515.4h8.6M4.8 518.1h1.0M6.8 518.1h1.9M9.6 518.1h7.7M18.3 518.1h5.8M25.0 518.1h5.8M31.7 518.1h1.9M14.4 520.8h8.6M24.0 520.8h2.9M27.9 520.8h5.8M34.6 520.8h1.9M37.5 520.8h1.0M4.8 523.4h5.8M11.6 523.4h8.6M29.8 523.4h10.6M41.3 523.4h10.6M52.8 523.4h6.7M9.6 526.1h2.9M13.5 526.1h1.9M27.9 552.8h8.6M6.8 555.4h6.7M14.4 555.4h9.6M25.0 555.4h4.8M13.5 558.1h1.0M16.4 560.8h6.7M8.7 563.4h6.7M16.4 563.4h1.9M19.2 563.4h2.9M23.1 563.4h8.6M47.1 563.4h1.9M15.4 566.1h7.7M24.0 566.1h4.8M29.8 566.1h2.9M11.6 568.8h1.0M13.5 568.8h5.8M8.7 571.4h4.8M14.4 571.4h4.8M24.0 600.8h9.6M6.8 603.4h4.8M12.5 603.4h6.7M20.2 603.4h1.9M23.1 603.4h3.8M27.9 603.4h4.8M6.8 606.1h1.0M12.5 606.1h5.8M19.2 606.1h7.7M27.9 606.1h8.6M8.7 608.8h8.6M18.3 608.8h9.6M32.7 608.8h3.8M37.5 608.8h8.6M47.1 608.8h3.8M51.9 608.8h8.6M8.7 611.4h1.0M10.6 611.4h2.9M12.5 614.1h2.9M16.4 614.1h8.6M26.0 614.1h3.8M30.8 614.1h1.0M12.5 616.8h2.9M16.4 616.8h10.6M36.5 616.8h7.7M45.2 616.8h3.8M4.8 619.4h9.6M15.4 619.4h7.7M26.0 619.4h8.6M35.6 619.4h6.7M4.8 622.1h10.6M16.4 622.1h9.6M14.4 624.8h5.8M21.2 624.8h9.6M25.0 646.1h11.5M13.5 648.8h10.6M25.0 648.8h7.7M33.6 648.8h6.7M41.3 648.8h1.0M6.8 651.4h4.8M12.5 651.4h9.6M23.1 651.4h3.8M34.6 651.4h5.8M4.8 654.1h5.8M11.6 654.1h6.7M8.7 656.8h3.8M13.5 656.8h3.8M18.3 656.8h9.6M28.8 656.8h3.8M33.6 656.8h6.7M41.3 656.8h2.9M4.8 659.4h7.7M13.5 659.4h3.8M18.3 659.4h8.6M27.9 659.4h6.7M35.6 659.4h8.6M50.0 659.4h5.8M16.4 662.1h4.8M22.1 662.1h1.9M25.0 662.1h3.8M29.8 662.1h5.8M36.5 662.1h5.8M43.2 662.1h10.6M13.5 664.8h5.8M20.2 664.8h4.8M26.0 664.8h6.7M33.6 664.8h2.9M6.8 667.5h5.8M13.5 667.5h7.7M26.0 688.8h11.5M4.8 691.5h2.9M8.7 691.5h5.8M22.1 691.5h3.8M38.4 691.5h6.7M46.1 691.5h1.9M14.4 694.1h10.6M26.0 694.1h4.8M31.7 694.1h7.7M40.4 694.1h2.9M9.6 696.8h8.6M19.2 696.8h1.0M21.2 696.8h7.7M39.4 696.8h5.8M46.1 696.8h1.9M8.7 699.5h6.7M16.4 699.5h2.9M20.2 699.5h9.6M12.5 702.1h10.6M24.0 702.1h3.8M28.8 702.1h5.8M2.9 726.1h17.3M29.8 726.1h8.6M14.4 728.8h5.8M21.2 728.8h3.8M26.0 728.8h2.9M29.8 728.8h6.7M37.5 728.8h2.9M41.3 728.8h4.8M18.3 731.5h2.9M22.1 731.5h7.7M30.8 731.5h2.9M34.6 731.5h4.8M40.4 731.5h10.6M10.6 734.1h1.0M12.5 734.1h5.8M4.8 736.8h5.8M11.6 736.8h7.7M20.2 736.8h1.9M23.1 736.8h10.6M34.6 736.8h6.7M4.8 739.5h6.7M12.5 739.5h4.8M18.3 739.5h2.9M22.1 739.5h1.9M25.0 739.5h4.8M30.8 739.5h6.7M26.0 768.8h10.6M6.8 771.5h3.8M11.6 771.5h9.6M4.8 774.1h7.7M13.5 774.1h1.0M15.4 774.1h1.0M4.8 779.5h4.8M10.6 779.5h7.7M19.2 779.5h8.6M28.8 779.5h1.9M31.7 779.5h7.7M40.4 779.5h6.7M15.4 782.1h6.7M4.8 784.8h10.6M22.1 784.8h5.8M28.8 784.8h4.8M8.7 787.5h3.8M27.9 808.8h3.8M11.6 811.5h2.9M15.4 811.5h1.9M18.3 811.5h5.8M25.0 811.5h5.8M18.3 814.1h1.9M21.2 814.1h7.7M29.8 814.1h7.7M38.4 814.1h6.7M46.1 814.1h6.7M6.8 816.8h4.8M12.5 816.8h5.8M19.2 816.8h7.7M27.9 816.8h4.8M33.6 816.8h5.8M6.8 819.5h1.0M17.3 819.5h10.6M28.8 819.5h2.9M32.7 819.5h1.9M4.8 822.1h1.0M6.8 822.1h5.8M9.6 824.8h7.7M18.3 824.8h7.7M26.9 824.8h1.9M29.8 824.8h1.0M31.7 824.8h8.6M41.3 824.8h1.9M28.8 846.1h5.8M8.7 848.8h3.8M21.2 848.8h5.8M27.9 848.8h4.8M17.3 851.5h1.9M12.5 854.1h3.8M17.3 854.1h5.8M24.0 854.1h6.7M8.7 856.8h5.8M15.4 856.8h6.7M33.6 856.8h4.8M4.8 859.5h6.7M12.5 859.5h1.9M15.4 859.5h5.8M22.1 859.5h7.7M30.8 859.5h4.8M36.5 859.5h1.0M23.1 862.1h1.9M30.8 862.1h1.0M8.7 864.8h5.8M15.4 864.8h1.0M17.3 864.8h2.9M21.2 864.8h5.8M27.9 864.8h8.6M37.5 864.8h10.6M49.0 864.8h1.0M6.8 867.5h3.8M13.5 867.5h10.6M25.0 867.5h10.6M36.5 867.5h8.6M17.3 870.1h9.6" stroke="#8c8c8c" stroke-width="1.500" opacity=".8" fill="none"/><path d="M20.2 14.0h1.0M10.6 96.7h5.8M20.2 96.7h1.9M43.2 102.0h3.8M16.4 216.7h1.9M25.0 248.7h9.6M26.0 302.1h1.0M10.6 307.4h9.6M26.0 406.1h2.9M19.2 414.1h10.6M20.2 470.1h2.9M25.0 512.8h8.6M28.8 608.8h2.9M14.4 611.4h9.6M27.9 616.8h7.7M24.0 619.4h1.0M45.2 659.4h3.8M14.4 776.8h4.8M13.5 822.1h8.6M13.5 848.8h6.7M8.7 851.5h7.7M38.4 859.5h3.8M26.0 862.1h3.8M11.6 867.5h1.0" stroke="#8d6149" stroke-width="1.500" opacity=".8" fill="none"/><path d="M23.1 35.4h1.0M2.9 40.7h1.9M2.9 72.7h1.9M2.9 104.7h1.9M2.9 142.1h1.9M2.9 192.7h1.9M2.9 227.4h1.9M2.9 262.1h1.9M2.9 310.1h1.9M2.9 339.4h1.9M2.9 376.7h1.9M2.9 416.8h1.9M2.9 443.4h1.9M2.9 478.1h1.9M2.9 528.8h1.9M2.9 574.1h1.9M2.9 627.4h1.9M2.9 670.1h1.9M2.9 704.8h1.9M2.9 742.1h1.9M2.9 790.1h1.9M2.9 827.5h1.9M2.9 872.8h1.9" stroke="#7f5a86" stroke-width="1.500" opacity=".8" fill="none"/></svg><div class="abs" style="left:2163px;top:4px;width:1.500px;height:891px;background:#3f3f3f"></div>
<div class="abs" style="left:2163px;top:4px;width:24.500px;height:1.200px;background:#3c3c3c"></div>
<div class="abs" style="left:2164.500px;top:16.500px;width:22.500px;height:3.500px;background:#999"></div>
</div>

<div class="abs" style="left:735.500px;top:1170.500px;width:2190.500px;height:60.500px;background:#404040"></div>
<svg class="abs" style="left:754px;top:1185px" width="32" height="33" viewBox="0 0 32 33"><rect x="0" y="0" width="32" height="33" rx="4" fill="#e4e4e4"/><g fill="#404040"><rect x="5" y="6" width="4" height="3"/><rect x="11" y="6" width="16" height="3"/><rect x="5" y="12" width="4" height="3"/><rect x="11" y="12" width="16" height="3"/></g></svg>
<div class="abs ui" style="left:798.500px;top:1190.500px;color:#d0d0d0">运行日志</div>
<div class="abs" style="left:914.500px;top:1184.500px;width:236px;height:34px;background:#2e2e2e;border:1.500px solid #555"></div>
<div class="abs" style="left:1097px;top:1186px;width:52px;height:31px;background:#404040;border-left:1.500px solid #555"></div>
<svg class="abs" style="left:1115px;top:1196px" width="17" height="10.500" viewBox="0 0 17 10.500"><path d="M0 0H17L8.500 10.500Z" fill="#c0c0c0"/></svg>
<div class="abs ui" style="left:918.500px;top:1188px;color:#d8d8d8">全部</div>
<svg class="abs" style="left:1184px;top:1184px" width="31" height="35" viewBox="0 0 31 35" fill="none" stroke="#3d8fd0" stroke-width="2.200" stroke-linejoin="round" stroke-linecap="round"><path d="M12 14V4a3.500 3.500 0 0 1 7 0V14"/><path d="M5 14H26a3 3 0 0 1 3 3V21H2V17a3 3 0 0 1 3-3Z"/><path d="M4.500 21L2.500 33H27.500L26.500 21"/><path d="M9 33L10 27M15.500 33V27M22 33L21 27"/></svg>
<svg class="abs" style="left:1250px;top:1190px" width="30" height="29" viewBox="0 0 30 29" fill="none" stroke="#d8d8d8" stroke-width="1.800" stroke-linecap="round" stroke-linejoin="round"><path d="M14 3.500H5a3 3 0 0 0-3 3V24.500a3 3 0 0 0 3 3H25a3 3 0 0 0 3-3V16.500"/><circle cx="23.500" cy="6" r="4"/><path d="M4.500 25L15.500 14M9.500 13.500h6.500v6.500"/></svg>
<div id="log">
<div class="abs" style="left:0;top:15.700px;width:2176px;height:691.300px;overflow:hidden">
<div class="ll" style="top:-24.500px;color:#2b9fe0">[<b>提示</b>] <b>【</b>String<b>】开始运行脚本</b> gy</div>
<div class="ll" id="ll0" style="top:29.7px">[2025-09-07 09:16:13] <u>&nbsp;#0&nbsp;</u><b>【</b>String<b>】</b><span style="letter-spacing:0.83px;margin-left:4px">=== 1. <b>基础随机值测试</b> ===</span> </div>
<div class="ll" id="ll1" style="top:82.9px">[2025-09-07 09:16:13] <u>&nbsp;#0&nbsp;</u><b>【</b>String<b>】</b><span style="letter-spacing:-0.48px;margin-left:4px">0-1<b>随机小数</b>: 0.3015</span> </div>
<div class="ll" id="ll2" style="top:136.1px">[2025-09-07 09:16:13] <u>&nbsp;#0&nbsp;</u><b>【</b>String<b>】</b><span style="letter-spacing:-0.35px;margin-left:4px">10-100<b>随机整数</b>: 50</span> </div>
<div class="ll" id="ll3" style="top:189.3px">[2025-09-07 09:16:13] <u>&nbsp;#0&nbsp;</u><b>【</b>String<b>】</b><span style="letter-spacing:-0.66px;margin-left:4px">50%<b>概率布尔值</b>: false</span> </div>
<div class="ll" id="ll4" style="top:242.5px">[2025-09-07 09:16:13] <u>&nbsp;#0&nbsp;</u><b>【</b>String<b>】</b><span style="letter-spacing:-0.20px;margin-left:4px">30%<b>概率</b>true: true</span> </div>
<div class="ll" id="ll5" style="top:295.7px">[2025-09-07 09:16:13] <u>&nbsp;#0&nbsp;</u><b>【</b>String<b>】</b><span style="letter-spacing:-0.89px;margin-left:4px">16<b>位随机字符</b>: XC3PFUyvlN5LAHUk</span> </div>
<div class="ll" id="ll6" style="top:348.9px">[2025-09-07 09:16:13] <u>&nbsp;#0&nbsp;</u><b>【</b>String<b>】</b><span style="letter-spacing:0.00px;margin-left:4px"></span> </div>
<div class="ll" id="ll7" style="top:402.1px">[2025-09-07 09:16:13] <u>&nbsp;#0&nbsp;</u><b>【</b>String<b>】</b><span style="letter-spacing:0.90px;margin-left:4px">=== 2. <b>坐标随机测试</b> ===</span> </div>
<div class="ll" id="ll8" style="top:455.3px">[2025-09-07 09:16:13] <u>&nbsp;#0&nbsp;</u><b>【</b>String<b>】</b><span style="letter-spacing:-0.45px;margin-left:4px"><b>指定区域随机坐标</b>: {"x":346.53,"y":517.13}</span> </div>
<div class="ll" id="ll9" style="top:508.5px">[2025-09-07 09:16:13] <u>&nbsp;#0&nbsp;</u><b>【</b>String<b>】</b><span style="letter-spacing:0.00px;margin-left:4px"></span> </div>
<div class="ll" id="ll10" style="top:561.7px">[2025-09-07 09:16:13] <u>&nbsp;#0&nbsp;</u><b>【</b>String<b>】</b><span style="letter-spacing:0.90px;margin-left:4px">=== 3. <b>数组随机测试</b> ===</span> </div>
<div class="ll" id="ll11" style="top:614.9px">[2025-09-07 09:16:13] <u>&nbsp;#0&nbsp;</u><b>【</b>String<b>】</b><span style="letter-spacing:-0.56px;margin-left:4px"><b>随机选</b>1<b>个水果</b>: <b>香蕉</b></span> </div>
<div class="ll" id="ll12" style="top:668.1px">[2025-09-07 09:16:13] <u>&nbsp;#0&nbsp;</u><b>【</b>String<b>】</b><span style="letter-spacing:0.25px;margin-left:4px"><b>随机选</b>3<b>个水果（不重复）</b>: ["<b>橙子</b>","<b>苹果</b>","<b>香蕉</b>"]</span> </div>
</div>
<div class="abs" style="left:2176px;top:16px;width:14px;height:691px;background:#393939"></div>
<div class="abs" style="left:2176px;top:37.500px;width:14px;height:216.500px;border-radius:6px;background:#5c5c5c"></div>
</div>

<div class="abs" style="left:2925px;top:232.500px;width:4.700px;height:1706px;background:#343434"></div>
<div class="abs" style="left:2929.700px;top:231px;width:4px;height:1707px;background:#404040"></div>
<div class="abs" style="left:2933.500px;top:183.500px;width:4.500px;height:1755px;background:#3b3b3b"></div>
<div class="abs" style="left:2933.500px;top:183.500px;width:1.200px;height:1755px;background:#333"></div>
<div class="abs" style="left:2934.500px;top:232px;width:4px;height:48.500px;background:#404040;border:1.500px solid #2f2f2f;border-right:0"></div>
<div class="abs" style="left:2934.500px;top:332.9px;width:4px;height:2px;background:#303030"></div>
<div class="abs" style="left:2934.500px;top:387.4px;width:4px;height:2px;background:#303030"></div>
<div class="abs" style="left:2934.500px;top:441.9px;width:4px;height:2px;background:#303030"></div>
<div class="abs" style="left:2934.500px;top:496.3px;width:4px;height:2px;background:#303030"></div>
<div class="abs" style="left:2934.500px;top:550.8px;width:4px;height:2px;background:#303030"></div>
<div class="abs" style="left:2934.500px;top:605.2px;width:4px;height:2px;background:#303030"></div>
<div class="abs" style="left:2934.500px;top:659.7px;width:4px;height:2px;background:#303030"></div>
<div class="abs" style="left:2934.500px;top:714.1px;width:4px;height:2px;background:#303030"></div>
<div class="abs" style="left:2934.500px;top:768.5px;width:4px;height:2px;background:#303030"></div>
<div class="abs" style="left:2934.500px;top:823.0px;width:4px;height:2px;background:#303030"></div>
<div class="abs" style="left:2934.500px;top:877.5px;width:4px;height:2px;background:#303030"></div>
<div class="abs" style="left:2934.500px;top:931.9px;width:4px;height:2px;background:#303030"></div>
<div class="abs" style="left:2934.500px;top:986.4px;width:4px;height:2px;background:#303030"></div>
<div class="abs" style="left:2934.500px;top:1040.8px;width:4px;height:2px;background:#303030"></div>
<div class="abs" style="left:2934.500px;top:1095.2px;width:4px;height:2px;background:#303030"></div>
<div class="abs" style="left:2934.500px;top:1149.7px;width:4px;height:2px;background:#303030"></div>
<div class="abs" style="left:2934.500px;top:1204.2px;width:4px;height:2px;background:#303030"></div>
<div class="abs" style="left:2934.500px;top:1258.6px;width:4px;height:2px;background:#303030"></div>
<div class="abs" style="left:2934.500px;top:1313.0px;width:4px;height:2px;background:#303030"></div>
<div class="abs" style="left:2934.500px;top:1367.5px;width:4px;height:2px;background:#303030"></div>
<div class="abs" style="left:2934.500px;top:1422.0px;width:4px;height:2px;background:#303030"></div>
<div class="abs" style="left:2934.500px;top:1476.4px;width:4px;height:2px;background:#303030"></div>
<div class="abs" style="left:2934.500px;top:1530.9px;width:4px;height:2px;background:#303030"></div>
<div class="abs" style="left:2934.500px;top:1585.3px;width:4px;height:2px;background:#303030"></div>
<div class="abs" style="left:2934.500px;top:1639.8px;width:4px;height:2px;background:#303030"></div>
<div class="abs" style="left:2934.500px;top:1694.2px;width:4px;height:2px;background:#303030"></div>
<div class="abs" style="left:2934.500px;top:1748.7px;width:4px;height:2px;background:#303030"></div>
<div class="abs" style="left:2934.500px;top:1803.1px;width:4px;height:2px;background:#303030"></div>
<div class="abs" style="left:2934.500px;top:1857.6px;width:4px;height:2px;background:#303030"></div>
<div class="abs" style="left:2934.500px;top:1912.0px;width:4px;height:2px;background:#303030"></div>
</body></html>
